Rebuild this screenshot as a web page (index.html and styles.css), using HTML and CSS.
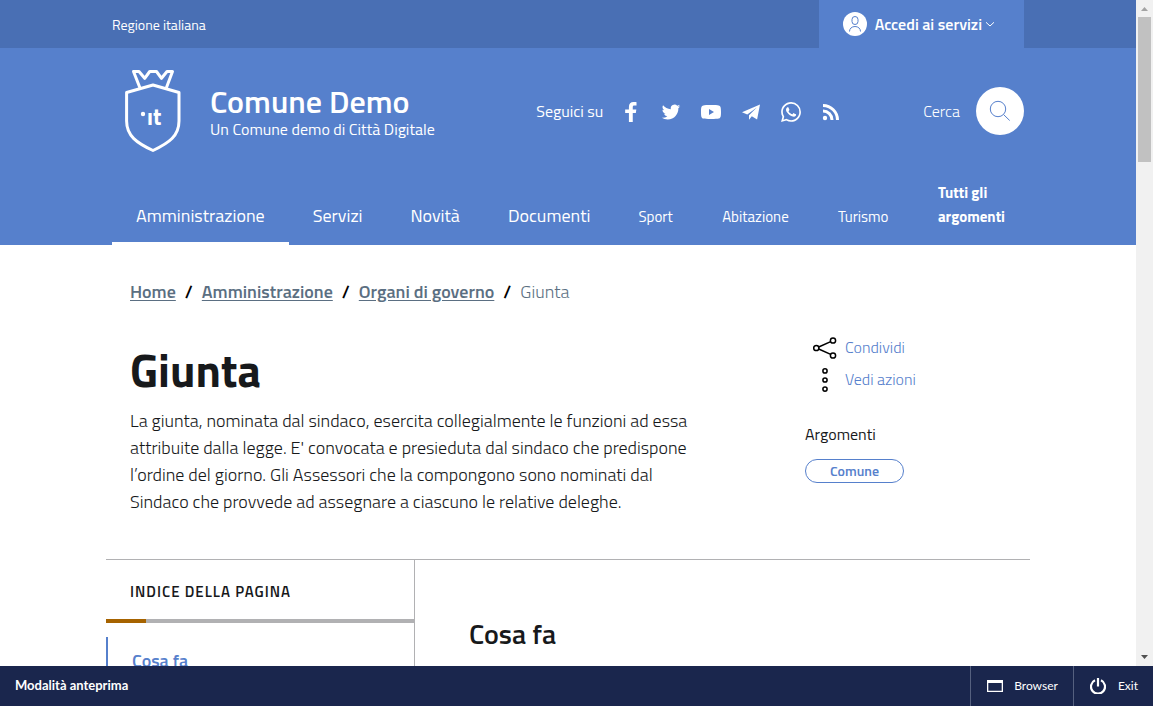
FILE: index.html
```html
<!DOCTYPE html>
<html lang="it">
<head>
<meta charset="utf-8">
<meta name="viewport" content="width=device-width, initial-scale=1">
<title>Giunta - Comune Demo</title>
<link rel="stylesheet" href="styles.css">
</head>
<body>
<div class="viewport">
  <div class="page">
    <header class="header">
      <div class="slim">
        <div class="container slim-row">
          <a class="region" href="#">Regione italiana</a>
          <button class="login" type="button">
            <svg class="avatar" viewBox="0 0 24 24" aria-hidden="true"><circle cx="12" cy="12" r="12" fill="#fff"/><g fill="none" stroke="#5680cc"><rect x="9" y="4.500" width="6" height="8" rx="3"/><path d="M6.500 19.500c0-3 2.300-5 5.500-5s5.500 2 5.500 5"/></g></svg>
            <span>Accedi ai servizi</span>
            <svg class="caret" viewBox="0 0 8 8" aria-hidden="true"><path d="M0 2.300 4 6l4-3.700" fill="none" stroke="#fff"/></svg>
          </button>
        </div>
      </div>
      <div class="container brand-row">
        <a class="brand" href="#">
          <svg class="logo" viewBox="0 0 82 84" aria-hidden="true">
            <g fill="none" stroke="#fff" stroke-width="3" stroke-linejoin="round">
              <path d="M41 16 67 23.500V52C67 67 57 74 41 81.500 25 74 14.600 67 14.600 52V23.500Z"/>
              <path d="M28 19 21.500 2.500H27l5.700 6.800 5-6.800h6.800l5 6.800 5.500-6.800h5.500L54.300 19"/>
            </g>
            <circle cx="31" cy="45" r="2.200" fill="#fff"/>
            <text class="logo-text" x="35" y="56">ıt</text>
          </svg>
          <span class="brand-text">
            <span class="brand-name">Comune Demo</span>
            <span class="brand-tag">Un Comune demo di Città Digitale</span>
          </span>
        </a>
        <div class="social">
          <span class="social-label">Seguici su</span>
          <ul class="social-list">
            <li><a href="#" aria-label="Facebook"><svg viewBox="0 0 24 24"><path d="M9.500 24V13.200H5V9h4.500V5.600C9.500 1.900 11.600 0 15 0c1.700 0 3 .1 3.600.2v3.900h-2.400c-1.800 0-2.100.8-2.100 2V9h4.300l-.6 4.200h-3.700V24z"/></svg></a></li>
            <li><a href="#" aria-label="Twitter"><svg viewBox="-1 -1 26 26"><path d="M23.953 4.570a10 10 0 01-2.825.775 4.958 4.958 0 002.163-2.723c-.951.555-2.005.959-3.127 1.184a4.920 4.920 0 00-8.384 4.482C7.690 8.095 4.067 6.130 1.640 3.162a4.822 4.822 0 00-.666 2.475c0 1.710.87 3.213 2.188 4.096a4.904 4.904 0 01-2.228-.616v.06a4.923 4.923 0 003.946 4.827 4.996 4.996 0 01-2.212.085 4.936 4.936 0 004.604 3.417 9.867 9.867 0 01-6.102 2.105c-.39 0-.779-.023-1.170-.067a13.995 13.995 0 007.557 2.209c9.053 0 13.998-7.496 13.998-13.985 0-.21 0-.42-.015-.63A9.935 9.935 0 0024 4.590z"/></svg></a></li>
            <li><a href="#" aria-label="YouTube"><svg viewBox="0 0 20 20"><path fill-rule="evenodd" d="M10 3c4 0 6.500.1 7.700.4C19.500 3.900 20 5 20 10s-.5 6.100-2.300 6.600C16.500 16.900 14 17 10 17s-6.500-.1-7.700-.4C.5 16.100 0 15 0 10s.5-6.100 2.300-6.600C3.500 3.100 6 3 10 3ZM8 7v6l5-3Z"/></svg></a></li>
            <li><a href="#" aria-label="Telegram"><svg viewBox="0 0 20 20"><path d="M19 2.500 1 10.200l5.300 2.200L15.800 5.600 8 13.200v4.600l2.800-3.500 5.300 3.300Z"/></svg></a></li>
            <li><a href="#" aria-label="WhatsApp"><svg viewBox="0 0 24 24"><path d="M17.472 14.382c-.297-.149-1.758-.867-2.030-.967-.273-.099-.471-.148-.67.15-.197.297-.767.966-.94 1.164-.173.199-.347.223-.644.075-.297-.15-1.255-.463-2.390-1.475-.883-.788-1.480-1.761-1.653-2.059-.173-.297-.018-.458.13-.606.134-.133.298-.347.446-.52.149-.174.198-.298.298-.497.099-.198.05-.371-.025-.52-.075-.149-.669-1.612-.916-2.207-.242-.579-.487-.5-.669-.51-.173-.008-.371-.01-.57-.01-.198 0-.52.074-.792.372-.272.297-1.040 1.016-1.040 2.479 0 1.462 1.065 2.875 1.213 3.074.149.198 2.096 3.200 5.077 4.487.709.306 1.262.489 1.694.625.712.227 1.360.195 1.871.118.571-.085 1.758-.719 2.006-1.413.248-.694.248-1.289.173-1.413-.074-.124-.272-.198-.57-.347m-5.421 7.403h-.004a9.870 9.870 0 01-5.031-1.378l-.361-.214-3.741.982.998-3.648-.235-.374a9.860 9.860 0 01-1.510-5.260c.001-5.450 4.436-9.884 9.888-9.884 2.640 0 5.122 1.030 6.988 2.898a9.825 9.825 0 012.893 6.994c-.003 5.450-4.437 9.884-9.885 9.884m8.413-18.297A11.815 11.815 0 0012.050 0C5.495 0 .16 5.335.157 11.892c0 2.096.547 4.142 1.588 5.945L.057 24l6.305-1.654a11.882 11.882 0 005.683 1.448h.005c6.554 0 11.890-5.335 11.893-11.893a11.821 11.821 0 00-3.480-8.413z"/></svg></a></li>
            <li><a href="#" aria-label="RSS"><svg viewBox="0 0 20 20"><circle cx="4" cy="16" r="2.200"/><path d="M2 3.500A14.500 14.500 0 0 1 16.500 18M2 9a9 9 0 0 1 9 9" fill="none" stroke="#fff" stroke-width="3"/></svg></a></li>
          </ul>
        </div>
        <div class="search">
          <span id="search-label">Cerca</span>
          <button class="search-btn" type="button" aria-labelledby="search-label">
            <svg viewBox="0 0 24 24" aria-hidden="true"><g fill="none" stroke="#5680cc"><circle cx="10" cy="10" r="7.700"/><path d="m15.500 15.500 6.200 6"/></g></svg>
          </button>
        </div>
      </div>
      <nav class="container nav" aria-label="Principale">
        <ul class="nav-main">
          <li><a class="active" href="#" aria-current="page">Amministrazione</a></li>
          <li><a href="#">Servizi</a></li>
          <li><a href="#">Novità</a></li>
          <li><a href="#">Documenti</a></li>
        </ul>
        <ul class="nav-topics">
          <li><a href="#">Sport</a></li>
          <li><a href="#">Abitazione</a></li>
          <li><a href="#">Turismo</a></li>
          <li><a class="all" href="#">Tutti gli<br>argomenti</a></li>
        </ul>
      </nav>
    </header>
    <main class="content">
      <nav class="breadcrumb" aria-label="Percorso">
        <a href="#">Home</a><span class="sep">/</span><a href="#">Amministrazione</a><span class="sep">/</span><a href="#">Organi di governo</a><span class="sep">/</span><span class="current">Giunta</span>
      </nav>
      <div class="intro">
        <div class="lead">
          <h1>Giunta</h1>
          <p>La giunta, nominata dal sindaco, esercita collegialmente le funzioni ad essa attribuite dalla legge. E' convocata e presieduta dal sindaco che predispone l’ordine del giorno. Gli Assessori che la compongono sono nominati dal Sindaco che provvede ad assegnare a ciascuno le relative deleghe.</p>
        </div>
        <aside class="actions">
          <button class="action" type="button">
            <svg viewBox="0 0 24 24" aria-hidden="true"><g fill="none" stroke="#000" stroke-width="1.500"><circle cx="3.300" cy="12" r="2.600"/><circle cx="20" cy="4.500" r="2.600"/><circle cx="20" cy="19.500" r="2.600"/><path d="m5.700 11 12-5.400M5.700 13l12 5.400"/></g></svg>
            <span>Condividi</span>
          </button>
          <button class="action" type="button">
            <svg viewBox="0 0 24 24" aria-hidden="true"><g fill="none" stroke="#000" stroke-width="1.500"><circle cx="12" cy="2.900" r="2.100"/><circle cx="12" cy="12" r="2.100"/><circle cx="12" cy="21.100" r="2.100"/></g></svg>
            <span>Vedi azioni</span>
          </button>
          <h2 class="topics-title">Argomenti</h2>
          <a class="chip" href="#">Comune</a>
        </aside>
      </div>
      <div class="body-grid">
        <nav class="index" aria-label="Indice della pagina">
          <h2 class="index-title">Indice della pagina</h2>
          <div class="progress"><div class="progress-value"></div></div>
          <a class="index-link" href="#cosa-fa">Cosa fa</a>
        </nav>
        <section class="section" id="cosa-fa">
          <h2>Cosa fa</h2>
        </section>
      </div>
    </main>
  </div>
  <div class="scrollbar" aria-hidden="true">
    <svg viewBox="0 0 17 17"><path d="M5 11h7L8.500 7Z" fill="#a3a3a3"/></svg>
    <div class="track"><div class="thumb"></div></div>
    <svg viewBox="0 0 17 17"><path d="M5 6h7l-3.500 4Z" fill="#505050"/></svg>
  </div>
</div>
<footer class="preview">
  <strong>Modalità anteprima</strong>
  <button class="tool browser" type="button">
    <svg viewBox="0 0 16 16" aria-hidden="true"><path fill="#fff" fill-rule="evenodd" d="M0 2h16v12H0ZM1.300 5v7.700h13.400V5Z"/></svg>
    <span>Browser</span>
  </button>
  <button class="tool exit" type="button">
    <svg viewBox="0 0 16 16" aria-hidden="true"><path d="M5 2.300a7 7 0 1 0 6 0M8 0v8.500" fill="none" stroke="#fff" stroke-width="2.200"/></svg>
    <span>Exit</span>
  </button>
</footer>
</body>
</html>
```
FILE: styles.css
```css
* { box-sizing: border-box; }
body {
  margin: 0;
  height: 100vh;
  display: flex;
  flex-direction: column;
  overflow: hidden;
  font-family: "Titillium Web", Roboto, sans-serif;
  font-size: 16px;
  line-height: 24px;
  color: #17191b;
  background: #fff;
}
ul { margin: 0; padding: 0; list-style: none; }
h1, h2, p { margin: 0; }
svg { display: block; flex: none; }
a { color: inherit; text-decoration: none; }
button {
  padding: 0;
  border: 0;
  background: none;
  font: inherit;
  color: inherit;
  cursor: pointer;
}

.viewport { flex: 1; min-height: 0; display: flex; }
.page { flex: 1; min-width: 0; overflow: hidden; }
.container { max-width: 912px; margin: 0 auto; }

.header { background: #5680cc; color: #fff; }
.slim { background: #496fb4; }
.slim-row { display: flex; justify-content: space-between; align-items: center; height: 48px; }
.region { padding-top: 2px; font-size: 14px; }
.login {
  display: flex;
  align-items: center;
  gap: 8px;
  height: 48px;
  padding: 0 30px 0 24px;
  background: #5680cc;
  font-size: 16px;
  font-weight: 600;
}
.login span { margin-right: -4px; }
.avatar { width: 24px; height: 24px; }
.caret { width: 8px; height: 8px; }

.brand-row { display: flex; align-items: center; height: 126px; }
.brand { display: flex; align-items: center; gap: 16px; }
.logo { width: 82px; height: 84px; }
.logo-text { font-size: 23px; font-weight: 700; fill: #fff; }
.brand-text { display: flex; flex-direction: column; padding-top: 4px; }
.brand-name { font-size: 32px; font-weight: 600; line-height: 32px; }
.brand-tag { font-size: 16px; }
.social { display: flex; align-items: center; gap: 18px; margin-left: auto; padding-top: 2px; }
.social-label { padding-bottom: 2px; }
.social-list { display: flex; gap: 20px; }
.social-list svg { width: 20px; height: 20px; fill: #fff; }
.search { display: flex; align-items: center; gap: 16px; margin-left: 82px; font-weight: 300; }
.search-btn {
  display: flex;
  align-items: center;
  justify-content: center;
  width: 48px;
  height: 48px;
  border-radius: 50%;
  background: #fff;
}
.search-btn svg { width: 24px; height: 24px; }

.nav { display: flex; align-items: flex-end; height: 71px; }
.nav-main, .nav-topics { display: flex; align-items: flex-end; }
.nav-main a { display: block; padding: 14px 24px; border-bottom: 3px solid transparent; font-size: 18px; }
.nav-main a.active { border-color: #fff; }
.nav-topics { flex: 1; justify-content: space-between; padding-right: 19px; }
.nav-topics a { display: block; padding: 0 0 16px 24px; font-size: 15px; }
.nav-topics .all { font-weight: 700; }

.content { max-width: 924px; margin: 0 auto; padding-top: 35px; }
.breadcrumb { padding: 0 24px; font-size: 18px; font-weight: 600; color: #5b6f82; }
.breadcrumb a { text-decoration: underline; text-underline-offset: 2px; }
.sep { margin: 0 9px; color: #000; }
.current { font-weight: 300; }

.intro { display: flex; justify-content: space-between; padding: 28px 24px 44px; }
.lead { max-width: 570px; padding-top: 9px; }
.lead h1 { font-size: 46px; font-weight: 700; line-height: 58px; }
.lead p { margin-top: 8px; font-size: 18px; font-weight: 300; line-height: 27px; }
.actions { display: flex; flex-direction: column; align-items: flex-start; width: 201px; }
.action {
  display: flex;
  align-items: center;
  gap: 8px;
  height: 32px;
  padding-left: 8px;
  font-weight: 300;
  color: #5680cc;
}
.action svg { width: 24px; height: 24px; }
.action span { padding-bottom: 2px; }
.topics-title { margin-top: 26px; font-size: 16px; font-weight: 400; }
.chip {
  margin-top: 13px;
  padding: 0 24px;
  border: 1px solid #5680cc;
  border-radius: 12px;
  font-size: 14px;
  font-weight: 600;
  line-height: 22px;
  color: #5680cc;
}

.body-grid { display: grid; grid-template-columns: 1fr 2fr; border-top: 1px solid #b1b1b3; }
.index-title {
  padding: 20px 24px 15px;
  font-size: 15px;
  font-weight: 600;
  letter-spacing: 1px;
  text-transform: uppercase;
}
.progress { height: 4px; background: #b1b1b3; }
.progress-value { width: 13%; height: 4px; background: #a66300; }
.index-link {
  display: block;
  margin-top: 14px;
  padding: 12px 24px;
  border-left: 2px solid #5680cc;
  font-size: 18px;
  font-weight: 600;
  color: #5680cc;
}
.section { padding: 57px 54px; border-left: 1px solid #b1b1b3; }
.section h2 { font-size: 28px; font-weight: 600; line-height: 34px; }

.scrollbar { display: flex; flex-direction: column; width: 17px; background: #f1f1f1; }
.scrollbar svg { width: 17px; height: 17px; }
.track { flex: 1; padding: 0 2px; }
.thumb { height: 23%; background: #c1c1c1; }

.preview {
  display: flex;
  align-items: stretch;
  height: 40px;
  background: #1a264d;
  color: #fff;
  font-family: Lato, sans-serif;
  font-size: 13px;
  line-height: 38px;
}
.preview strong { flex: 1; padding-left: 15px; }
.tool {
  display: flex;
  align-items: center;
  gap: 11px;
  padding: 0 15px 0 16px;
  border-left: 1px solid #55607f;
  font-size: 12px;
}
.exit { gap: 12px; }
.tool svg { width: 16px; height: 16px; }
```
